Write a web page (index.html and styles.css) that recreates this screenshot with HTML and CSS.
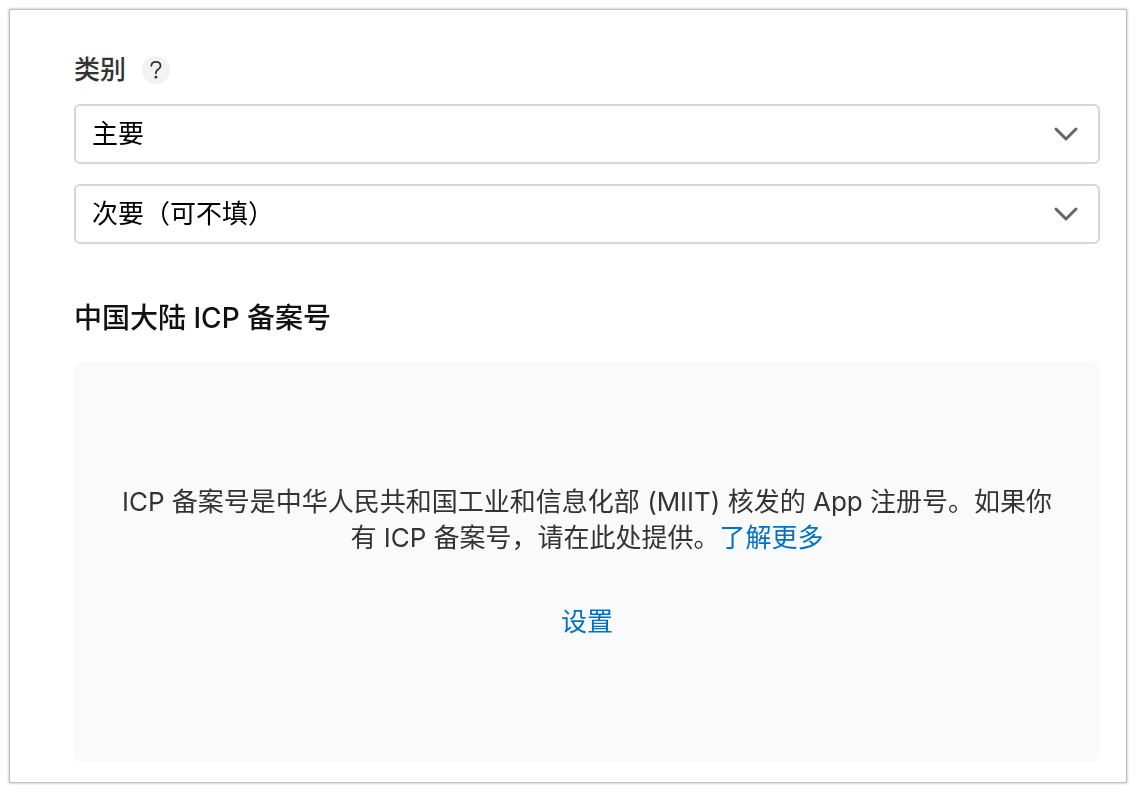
FILE: index.html
```html
<!DOCTYPE html>
<html lang="zh-CN">
<head>
<meta charset="utf-8">
<meta name="viewport" content="width=device-width, initial-scale=1">
<title>类别</title>
<link rel="stylesheet" href="styles.css">
</head>
<body>
<main class="card">
  <section class="category">
    <div class="category-head">
      <label class="category-label" for="primary">类别</label>
      <button class="help" type="button" aria-label="帮助">
        <svg class="help-icon" viewBox="0 0 28 28" aria-hidden="true">
          <path d="M9.3 9.8C9.5 7.2 11.3 5.9 13.8 5.9C16.5 5.9 18.5 7.5 18.5 9.9C18.5 11.7 17.4 12.7 16 13.6C14.5 14.6 13.9 15.3 13.9 16.7V17.3" fill="none" stroke="currentColor" stroke-width="1.8" stroke-linecap="round"/>
          <circle cx="13.9" cy="21.2" r="1.4" fill="currentColor"/>
        </svg>
      </button>
    </div>
    <div class="field">
      <select class="select" id="primary"><option>主要</option></select>
      <svg class="chevron" viewBox="0 0 24 14" aria-hidden="true"><path d="M2 2L12 12L22 2"/></svg>
    </div>
    <div class="field">
      <select class="select" id="secondary" aria-label="次要类别"><option>次要（可不填）</option></select>
      <svg class="chevron" viewBox="0 0 24 14" aria-hidden="true"><path d="M2 2L12 12L22 2"/></svg>
    </div>
  </section>
  <section class="icp">
    <h2 class="icp-title">中国大陆 ICP 备案号</h2>
    <div class="icp-panel">
      <p class="icp-text"><span>ICP 备案号是中华人民共和国工业和信息化部 (MIIT) 核发的 App 注册号。如果你有 ICP 备案号，请在此处提供。</span><a class="link" href="#">了解更多</a></p>
      <button class="setup" type="button">设置</button>
    </div>
  </section>
</main>
</body>
</html>
```

FILE: styles.css
```css
* {
  box-sizing: border-box;
}

body {
  margin: 7px;
  border: 1px solid #f3f3f3;
  border-radius: 3px;
  background: #fff;
  color: #333;
  font-family: Inter, "Noto Sans CJK SC", sans-serif;
  font-size: 26px;
  line-height: 36px;
}

.card {
  margin: 1px;
  padding: 42px 26px 20px 64px;
  border: 1px solid #c0c0c0;
  border-radius: 1px;
  outline: 1px solid #e2e2e2;
  background: #fff;
  filter: drop-shadow(0 1px 1px rgba(0, 0, 0, 0.1));
}

.category {
  display: flex;
  flex-direction: column;
  gap: 20px;
}

.category-head {
  display: flex;
  align-items: center;
  gap: 16px;
  margin-bottom: -4px;
}

.category-label {
  font-weight: 500;
}

.help {
  display: flex;
  width: 28px;
  height: 28px;
  padding: 0;
  border: 0;
  border-radius: 50%;
  background: #f2f2f2;
  color: #333;
}

.help-icon {
  width: 28px;
  height: 28px;
}

.field {
  position: relative;
}

.select {
  display: block;
  width: 100%;
  height: 60px;
  padding: 0 60px 0 16px;
  border: 2px solid #d6d6d6;
  border-radius: 6px;
  appearance: none;
  background: #fff;
  color: #000;
  font: inherit;
}

.chevron {
  position: absolute;
  top: 23px;
  right: 22px;
  width: 24px;
  height: 14px;
  fill: none;
  stroke: #666;
  stroke-width: 3;
  stroke-linecap: round;
  stroke-linejoin: round;
  pointer-events: none;
}

.icp {
  margin-top: 54px;
}

.icp-title {
  margin: 0 0 24px;
  color: #111;
  font-size: 28px;
  font-weight: 500;
  line-height: 40px;
}

.icp-panel {
  display: flex;
  flex-direction: column;
  align-items: center;
  gap: 48px;
  padding: 122px 44px;
  border-radius: 8px;
  background: #fafafa;
  text-align: center;
}

.icp-text {
  margin: 0;
}

.link {
  color: #0070c9;
  text-decoration: none;
}

.setup {
  padding: 0;
  border: 0;
  background: none;
  color: #0070c9;
  font: inherit;
}
```
